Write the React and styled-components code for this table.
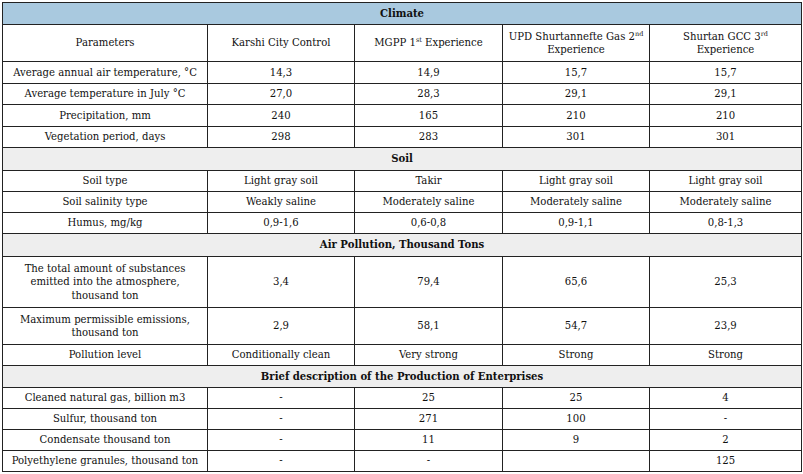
import React from "react";
import styled, { createGlobalStyle } from "styled-components";

const GlobalStyle = createGlobalStyle`
  html, body {
    margin: 0;
    padding: 0;
    background: #ffffff;
  }
  body {
    padding: 2px 0 0 2px;
  }
`;

const climateRows = [
  ["Average annual air temperature, °C", "14,3", "14,9", "15,7", "15,7"],
  ["Average temperature in July °C", "27,0", "28,3", "29,1", "29,1"],
  ["Precipitation, mm", "240", "165", "210", "210"],
  ["Vegetation period, days", "298", "283", "301", "301"],
];

const soilRows = [
  ["Soil type", "Light gray soil", "Takir", "Light gray soil", "Light gray soil"],
  ["Soil salinity type", "Weakly saline", "Moderately saline", "Moderately saline", "Moderately saline"],
  ["Humus, mg/kg", "0,9-1,6", "0,6-0,8", "0,9-1,1", "0,8-1,3"],
];

const airRows = [
  [
    <>The total amount of substances<br />emitted into the atmosphere,<br />thousand ton</>,
    "3,4", "79,4", "65,6", "25,3",
  ],
  [<>Maximum permissible emissions,<br />thousand ton</>, "2,9", "58,1", "54,7", "23,9"],
  ["Pollution level", "Conditionally clean", "Very strong", "Strong", "Strong"],
];
const airHeights = [51, 37, 21];

const productionRows = [
  ["Cleaned natural gas, billion m3", "-", "25", "25", "4"],
  ["Sulfur, thousand ton", "-", "271", "100", "-"],
  ["Condensate thousand ton", "-", "11", "9", "2"],
  ["Polyethylene granules, thousand ton", "-", "-", "", "125"],
];

const Section = ({ title, rows, heights, rowHeight = 21.5, headHeight = 23, tone }) => (
  <>
    <Row $h={headHeight}>
      <SectionCell colSpan={5} $tone={tone}>{title}</SectionCell>
    </Row>
    {rows.map((row, i) => (
      <Row key={i} $h={heights ? heights[i] : rowHeight}>
        {row.map((cell, j) => (
          <Cell key={j}>{cell}</Cell>
        ))}
      </Row>
    ))}
  </>
);

const App = () => (
  <>
    <GlobalStyle />
    <Table>
      <colgroup>
        <col style={{ width: 205 }} />
        <col style={{ width: 147 }} />
        <col style={{ width: 148 }} />
        <col style={{ width: 147 }} />
        <col style={{ width: 152 }} />
      </colgroup>
      <tbody>
        <Row $h={22}>
          <SectionCell colSpan={5} $tone="blue">Climate</SectionCell>
        </Row>
        <Row $h={37}>
          <Cell>Parameters</Cell>
          <Cell>Karshi City Control</Cell>
          <Cell>MGPP 1<Sup>st</Sup> Experience</Cell>
          <Cell>UPD Shurtannefte Gas 2<Sup>nd</Sup><br />Experience</Cell>
          <Cell>Shurtan GCC 3<Sup>rd</Sup><br />Experience</Cell>
        </Row>
        {climateRows.map((row, i) => (
          <Row key={i} $h={21.5}>
            {row.map((cell, j) => (
              <Cell key={j}>{cell}</Cell>
            ))}
          </Row>
        ))}
        <Section title="Soil" rows={soilRows} rowHeight={21} />
        <Section title="Air Pollution, Thousand Tons" rows={airRows} heights={airHeights} />
        <Section
          title="Brief description of the Production of Enterprises"
          rows={productionRows}
          rowHeight={21}
          headHeight={22}
        />
      </tbody>
    </Table>
  </>
);

const Table = styled.table`
  width: 799px;
  table-layout: fixed;
  border-collapse: collapse;
  font-family: "DejaVu Serif", "Liberation Serif", serif;
  font-size: 10.1px;
  color: #111;
`;

const Row = styled.tr`
  height: ${(p) => p.$h}px;
`;

const Cell = styled.td`
  border: 1px solid #222;
  padding: 0 3px;
  line-height: 13.5px;
  text-align: center;
  vertical-align: middle;
  white-space: nowrap;
`;

const SectionCell = styled.td`
  border: 1px solid #222;
  padding: 0 4px;
  line-height: 14px;
  text-align: center;
  font-weight: bold;
  background: ${(p) => (p.$tone === "blue" ? "#a9c9df" : "#eeeeee")};
`;

const Sup = styled.sup`
  font-size: 6.5px;
  line-height: 0;
  vertical-align: 4px;
`;

export default App;
